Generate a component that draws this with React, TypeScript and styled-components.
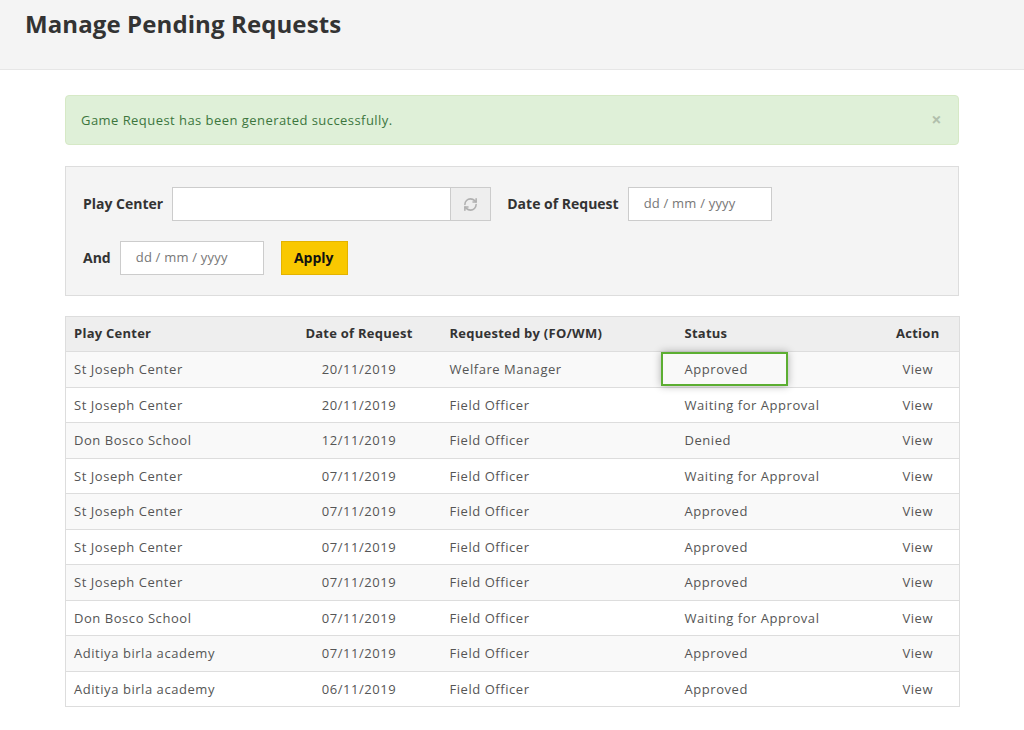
import React from "react";
import styled, { createGlobalStyle } from "styled-components";
import { RefreshCw } from "lucide-react";

const Global = createGlobalStyle`
  html, body { margin: 0; padding: 0; background: #fff; }
  body { font-family: "Open Sans", "Liberation Sans", sans-serif; color: #555; }
  * { box-sizing: border-box; }
`;

const Header = styled.header`
  height: 70px;
  background: #f4f4f4;
  border-bottom: 1px solid #e6e6e6;
  padding: 8px 25px 0;
`;

const Title = styled.h1`
  margin: 0;
  font-size: 24px;
  font-weight: 700;
  color: #333;
  letter-spacing: 0.1px;
  line-height: 32px;
`;

const Main = styled.main`
  width: 894px;
  margin: 25px 0 0 65px;
  display: flex;
  flex-direction: column;
`;

const Alert = styled.div`
  height: 50px;
  background: #dff0d8;
  border: 1px solid #d6e9c6;
  border-radius: 4px;
  color: #3c763d;
  font-size: 13px;
  letter-spacing: 0.45px;
  display: flex;
  align-items: center;
  justify-content: space-between;
  padding: 0 15px;
`;

const Close = styled.span`
  font-size: 18px;
  font-weight: 700;
  color: #000;
  opacity: 0.2;
  line-height: 1;
  margin-top: -2px;
  margin-right: 1px;
`;

const FilterPanel = styled.section`
  margin-top: 21px;
  height: 130px;
  background: #f4f4f4;
  border: 1px solid #ddd;
  padding: 20px 17px 0;
  display: flex;
  flex-direction: column;
  gap: 20px;
`;

const FilterRow = styled.div`
  display: flex;
  align-items: center;
  height: 34px;
`;

const Label = styled.label<{ $gap: number }>`
  font-size: 14px;
  font-weight: 700;
  color: #333;
  margin-right: ${(p) => p.$gap}px;
  white-space: nowrap;
  margin-top: -2px;
`;

const InputGroup = styled.div`
  display: flex;
  height: 34px;
  margin-right: 16px;
`;

const TextInput = styled.div<{ $w: number }>`
  width: ${(p) => p.$w}px;
  height: 34px;
  background: #fff;
  border: 1px solid #ccc;
`;

const Addon = styled.div`
  width: 40px;
  height: 34px;
  background: #eee;
  border: 1px solid #ccc;
  border-left: none;
  display: flex;
  align-items: center;
  justify-content: center;
  color: #b0b0b0;
`;

const DateInput = styled.div<{ $mr: number }>`
  width: 144px;
  height: 34px;
  background: #fff;
  border: 1px solid #ccc;
  font-size: 13px;
  color: #777;
  letter-spacing: 0.2px;
  padding: 0 0 3px 15px;
  display: flex;
  align-items: center;
  margin-right: ${(p) => p.$mr}px;
`;

const ApplyButton = styled.button`
  width: 67px;
  height: 34px;
  background: #f9c800;
  border: 1px solid #e3b300;
  font-family: inherit;
  font-size: 14px;
  font-weight: 700;
  color: #111;
  padding: 0 1px 2px 0;
  cursor: pointer;
`;

const Table = styled.table`
  margin-top: 20px;
  width: 894px;
  border-collapse: collapse;
  border: 1px solid #ddd;
  table-layout: fixed;
  font-size: 13px;
`;

const Th = styled.th<{ $w: number; $align?: string; $pl?: number }>`
  width: ${(p) => p.$w}px;
  height: 35px;
  background: #eee;
  color: #333;
  font-weight: 700;
  letter-spacing: 0.25px;
  text-align: ${(p) => p.$align || "left"};
  padding: 0 0 2px ${(p) => p.$pl ?? 0}px;
  border-bottom: 1px solid #ddd;
`;

const Tr = styled.tr<{ $odd: boolean }>`
  background: ${(p) => (p.$odd ? "#f9f9f9" : "#fff")};
`;

const Td = styled.td<{ $align?: string; $pl?: number }>`
  height: 35.5px;
  padding: 0 0 0 ${(p) => p.$pl ?? 0}px;
  text-align: ${(p) => p.$align || "left"};
  color: #555;
  letter-spacing: 0.55px;
  position: relative;
  white-space: nowrap;
  border-top: 1px solid #ddd;
`;

const Highlight = styled.span`
  position: absolute;
  left: -16px;
  top: 0;
  width: 127px;
  height: 34px;
  border: 2px solid #5cae32;
  box-shadow: 0 0 8px rgba(0, 0, 0, 0.3);
  pointer-events: none;
`;

const rows = [
  ["St Joseph Center", "20/11/2019", "Welfare Manager", "Approved"],
  ["St Joseph Center", "20/11/2019", "Field Officer", "Waiting for Approval"],
  ["Don Bosco School", "12/11/2019", "Field Officer", "Denied"],
  ["St Joseph Center", "07/11/2019", "Field Officer", "Waiting for Approval"],
  ["St Joseph Center", "07/11/2019", "Field Officer", "Approved"],
  ["St Joseph Center", "07/11/2019", "Field Officer", "Approved"],
  ["St Joseph Center", "07/11/2019", "Field Officer", "Approved"],
  ["Don Bosco School", "07/11/2019", "Field Officer", "Waiting for Approval"],
  ["Aditiya birla academy", "07/11/2019", "Field Officer", "Approved"],
  ["Aditiya birla academy", "06/11/2019", "Field Officer", "Approved"],
];

export default function App() {
  return (
    <>
      <Global />
      <Header>
        <Title>Manage Pending Requests</Title>
      </Header>
      <Main>
        <Alert>
          <span>Game Request has been generated successfully.</span>
          <Close>×</Close>
        </Alert>
        <FilterPanel>
          <FilterRow>
            <Label $gap={9}>Play Center</Label>
            <InputGroup>
              <TextInput $w={279} />
              <Addon>
                <RefreshCw size={15} strokeWidth={2.5} />
              </Addon>
            </InputGroup>
            <Label $gap={9}>Date of Request</Label>
            <DateInput $mr={0}>dd / mm / yyyy</DateInput>
          </FilterRow>
          <FilterRow>
            <Label $gap={9}>And</Label>
            <DateInput $mr={17}>dd / mm / yyyy</DateInput>
            <ApplyButton>Apply</ApplyButton>
          </FilterRow>
        </FilterPanel>
        <Table>
          <thead>
            <tr>
              <Th $w={211} $pl={8}>Play Center</Th>
              <Th $w={165} $align="center">Date of Request</Th>
              <Th $w={235} $pl={8}>Requested by (FO/WM)</Th>
              <Th $w={200} $pl={8}>Status</Th>
              <Th $w={83} $align="center">Action</Th>
            </tr>
          </thead>
          <tbody>
            {rows.map((r, i) => (
              <Tr key={i} $odd={i % 2 === 0}>
                <Td $pl={8}>{r[0]}</Td>
                <Td $align="center">{r[1]}</Td>
                <Td $pl={8}>{r[2]}</Td>
                <Td $pl={8}>
                  {i === 0 && <Highlight />}
                  {r[3]}
                </Td>
                <Td $align="center">View</Td>
              </Tr>
            ))}
          </tbody>
        </Table>
      </Main>
    </>
  );
}
